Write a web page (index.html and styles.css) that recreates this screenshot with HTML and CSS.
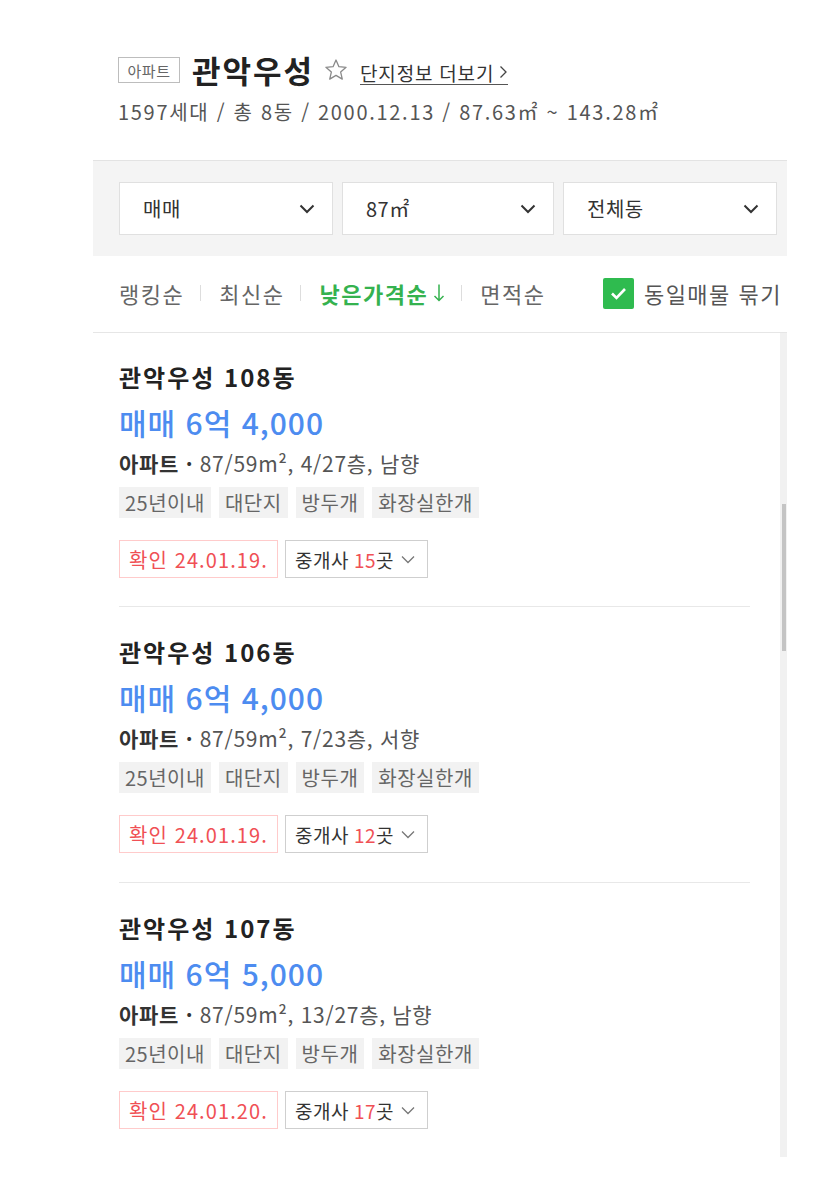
FILE: index.html
```html
<!DOCTYPE html>
<html lang="ko">
<head>
<meta charset="utf-8">
<title>관악우성</title>
<link rel="stylesheet" href="styles.css">
</head>
<body>
<div class="panel">
  <header class="header">
    <div class="title-row">
      <span class="type-badge">아파트</span>
      <h1 class="complex-name">관악우성</h1>
      <svg class="star" width="26" height="26" viewBox="0 0 24 24"><path d="M12 2.8l2.7 6.1 6.6.6-5 4.4 1.5 6.5L12 17l-5.8 3.4 1.5-6.5-5-4.4 6.6-.6z" fill="none" stroke="#8a8a8a" stroke-width="1.2" stroke-linejoin="round"/></svg>
      <a class="more-link">단지정보 더보기<svg class="more-chev" width="9" height="16" viewBox="0 0 9 16"><path d="M1.5 2.5l5.5 5.5-5.5 5.5" fill="none" stroke="#444" stroke-width="1.3"/></svg></a>
    </div>
    <p class="subtitle">1597세대 / 총 8동 / 2000.12.13 / 87.63㎡ ~ 143.28㎡</p>
  </header>

  <div class="filters">
    <div class="select select-wide"><span>매매</span><svg width="16" height="10" viewBox="0 0 16 10"><path d="M1.5 1.5l6.5 6.5 6.5-6.5" fill="none" stroke="#333" stroke-width="2"/></svg></div>
    <div class="select"><span>87㎡</span><svg width="16" height="10" viewBox="0 0 16 10"><path d="M1.5 1.5l6.5 6.5 6.5-6.5" fill="none" stroke="#333" stroke-width="2"/></svg></div>
    <div class="select select-wide"><span>전체동</span><svg width="16" height="10" viewBox="0 0 16 10"><path d="M1.5 1.5l6.5 6.5 6.5-6.5" fill="none" stroke="#333" stroke-width="2"/></svg></div>
  </div>

  <div class="sort-row">
    <span class="sort">랭킹순</span><span class="sep"></span>
    <span class="sort">최신순</span><span class="sep"></span>
    <span class="sort active">낮은가격순<svg class="down" width="12" height="20" viewBox="0 0 12 20"><path d="M6 1.5v16M1.5 13L6 17.5 10.5 13" fill="none" stroke="#35b24f" stroke-width="1.5"/></svg></span><span class="sep"></span>
    <span class="sort">면적순</span>
    <label class="group-check"><svg width="31" height="31" viewBox="0 0 31 31"><rect width="31" height="31" rx="2" fill="#2fbb4f"/><path d="M9 15.5l4.5 4.5 8.5-9" fill="none" stroke="#fff" stroke-width="2.6"/></svg><span>동일매물 묶기</span></label>
  </div>

  <div class="list">
    <div class="items">
      <article class="item">
        <h2 class="item-title">관악우성 108동</h2>
        <p class="price">매매 6억 4,000</p>
        <p class="info"><b>아파트 ·</b> 87/59m², 4/27층, 남향</p>
        <ul class="tags"><li>25년이내</li><li>대단지</li><li>방두개</li><li>화장실한개</li></ul>
        <div class="actions">
          <span class="confirm">확인 24.01.19.</span>
          <span class="broker">중개사 <em>15</em>곳<svg width="14" height="9" viewBox="0 0 14 9"><path d="M1 1.5l6 6 6-6" fill="none" stroke="#777" stroke-width="1.3"/></svg></span>
        </div>
      </article>
      <article class="item">
        <h2 class="item-title">관악우성 106동</h2>
        <p class="price">매매 6억 4,000</p>
        <p class="info"><b>아파트 ·</b> 87/59m², 7/23층, 서향</p>
        <ul class="tags"><li>25년이내</li><li>대단지</li><li>방두개</li><li>화장실한개</li></ul>
        <div class="actions">
          <span class="confirm">확인 24.01.19.</span>
          <span class="broker">중개사 <em>12</em>곳<svg width="14" height="9" viewBox="0 0 14 9"><path d="M1 1.5l6 6 6-6" fill="none" stroke="#777" stroke-width="1.3"/></svg></span>
        </div>
      </article>
      <article class="item last">
        <h2 class="item-title">관악우성 107동</h2>
        <p class="price">매매 6억 5,000</p>
        <p class="info"><b>아파트 ·</b> 87/59m², 13/27층, 남향</p>
        <ul class="tags"><li>25년이내</li><li>대단지</li><li>방두개</li><li>화장실한개</li></ul>
        <div class="actions">
          <span class="confirm">확인 24.01.20.</span>
          <span class="broker">중개사 <em>17</em>곳<svg width="14" height="9" viewBox="0 0 14 9"><path d="M1 1.5l6 6 6-6" fill="none" stroke="#777" stroke-width="1.3"/></svg></span>
        </div>
      </article>
    </div>
    <div class="scroll-track"><div class="scroll-thumb"></div></div>
  </div>
</div>
</body>
</html>
```
FILE: styles.css
```css
* { box-sizing: border-box; }
body {
  margin: 0;
  background: #fff;
  font-family: "Noto Sans CJK KR", "Noto Sans", sans-serif;
  color: #222;
}
p, h1, h2, ul { margin: 0; padding: 0; }
ul { list-style: none; }

.panel { margin-left: 93px; width: 694px; }

.header { height: 160px; padding: 50px 0 0 25px; }
.title-row { display: flex; align-items: center; height: 40px; }
.type-badge {
  display: inline-flex; align-items: center; justify-content: center;
  width: 62px; height: 26px;
  border: 1px solid #bdbdbd;
  font-size: 15px; color: #666; letter-spacing: 0.5px;
}
.complex-name {
  margin: 0 0 0 12px;
  font-size: 31px; font-weight: 700; color: #222; letter-spacing: 2px;
  line-height: 40px;
}
.star { margin-left: 9px; }
.more-link {
  display: inline-flex; align-items: center; gap: 5px;
  margin-left: 11px; margin-top: 5px;
  font-size: 19px; color: #333; letter-spacing: 0.8px;
  border-bottom: 1px solid #555; line-height: 23px;
}
.subtitle {
  margin-top: 10px;
  font-size: 20px; line-height: 24px; color: #555; letter-spacing: 1.7px;
}

.filters {
  display: flex; gap: 9px;
  height: 96px;
  padding: 21px 10px 0 26px;
  background: #f4f4f4;
  border-top: 1px solid #e3e3e3;
}
.select {
  flex: 0 0 212px;
  height: 53px;
  display: flex; align-items: center; justify-content: space-between;
  padding: 0 17px 0 23px;
  background: #fff;
  border: 1px solid #e0e0e0;
  font-size: 20px; color: #333; letter-spacing: 0.5px;
}
.select-wide { flex-basis: 214px; }

.sort-row {
  display: flex; align-items: center;
  height: 77px;
  padding: 0 0 2px 26px;
  border-bottom: 1px solid #e6e6e6;
  font-size: 22px; color: #666; letter-spacing: 1.5px;
}
.sort { display: inline-flex; align-items: center; }
.sort.active { color: #35b24f; font-weight: 700; }
.down { margin-left: 5px; }
.sep { width: 1px; height: 16px; background: #ddd; margin: 0 18px 0 16px; }
.group-check {
  display: inline-flex; align-items: center; gap: 10px;
  margin-left: auto; margin-right: 5px;
  color: #555;
}

.list { display: flex; }
.items { width: 687px; padding-left: 26px; }
.item {
  width: 631px;
  height: 276px;
  padding-top: 30px;
  border-bottom: 1px solid #e8e8e8;
}
.item:first-child { height: 274px; padding-top: 29px; }
.item.last { border-bottom: none; }
.item-title { font-size: 24px; font-weight: 700; line-height: 30px; color: #222; letter-spacing: 2px; }
.price { margin-top: 12px; font-size: 30px; line-height: 36px; color: #4d8cf0; font-weight: 500; letter-spacing: 1px; }
.info { margin-top: 10px; font-size: 21px; line-height: 26px; color: #555; letter-spacing: 0.7px; }
.info b { color: #333; }
.tags { display: flex; gap: 8px; margin-top: 11px; }
.tags li {
  height: 31px; padding: 0 6px;
  display: flex; align-items: center;
  background: #f2f2f2; color: #666; font-size: 20px; letter-spacing: 0.5px;
}
.actions { display: flex; gap: 7px; margin-top: 22px; }
.confirm, .broker {
  height: 38px; display: inline-flex; align-items: center;
}
.confirm { padding: 0 9px; border: 1px solid #ffcbcb; color: #f05055; font-size: 20px; letter-spacing: 1.1px; }
.broker { padding: 0 12px 0 9px; border: 1px solid #cfcfcf; color: #333; font-size: 19px; letter-spacing: 0.5px; }
.broker em { font-style: normal; color: #f05055; margin-left: 5px; }
.broker svg { margin-left: 7px; }

.scroll-track { width: 7px; height: 824px; background: #f1f1f1; padding: 171px 1px 0 2px; }
.scroll-thumb { height: 147px; background: #c4c4c4; }
```
